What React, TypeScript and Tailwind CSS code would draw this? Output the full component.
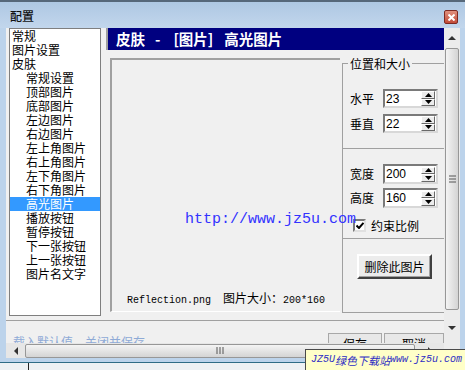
import type { ReactNode } from "react";

const tree = [
  { t: "常规", d: 0 },
  { t: "图片设置", d: 0 },
  { t: "皮肤", d: 0 },
  { t: "常规设置", d: 1 },
  { t: "顶部图片", d: 1 },
  { t: "底部图片", d: 1 },
  { t: "左边图片", d: 1 },
  { t: "右边图片", d: 1 },
  { t: "左上角图片", d: 1 },
  { t: "右上角图片", d: 1 },
  { t: "左下角图片", d: 1 },
  { t: "右下角图片", d: 1 },
  { t: "高光图片", d: 1, sel: true },
  { t: "播放按钮", d: 1 },
  { t: "暂停按钮", d: 1 },
  { t: "下一张按钮", d: 1 },
  { t: "上一张按钮", d: 1 },
  { t: "图片名文字", d: 1 },
];

function Spin() {
  return (
    <div className="ml-auto flex h-[15px] w-[14px] flex-col">
      <div className="flex flex-1 items-center justify-center border border-t-white border-l-white border-r-[#696969] border-b-[#696969] bg-[#ececec]">
        <svg width="7" height="4" viewBox="0 0 7 4">
          <path d="M3.5 0L7 4H0z" fill="#000" />
        </svg>
      </div>
      <div className="flex flex-1 items-center justify-center border border-t-white border-l-white border-r-[#696969] border-b-[#696969] bg-[#ececec]">
        <svg width="7" height="4" viewBox="0 0 7 4">
          <path d="M0 0H7L3.5 4z" fill="#000" />
        </svg>
      </div>
    </div>
  );
}

function Field({ label, value, h = "h-[19px]" }: { label: string; value: string; h?: string }) {
  return (
    <div className="flex items-center pl-[7px]">
      <span className="w-[33px]">{label}</span>
      <div
        className={`flex w-[55px] ${h} items-center border-2 border-t-[#7a7a7a] border-l-[#7a7a7a] border-r-[#d8d8d8] border-b-[#d8d8d8] bg-white pr-[1px]`}
      >
        <span className="pl-[1px] font-['Liberation_Sans',sans-serif] text-[12px]">{value}</span>
        <Spin />
      </div>
    </div>
  );
}

function Arrow({ dir }: { dir: "up" | "down" | "left" | "right" }) {
  const d = {
    up: "M0 4L4 0L8 4z",
    down: "M0 0H8L4 4z",
    left: "M4 0V8L0 4z",
    right: "M0 0L4 4L0 8z",
  }[dir];
  const v = dir === "up" || dir === "down" ? "0 0 8 4" : "0 0 4 8";
  const w = dir === "up" || dir === "down" ? 8 : 4;
  const hh = dir === "up" || dir === "down" ? 4 : 8;
  return (
    <svg width={w} height={hh} viewBox={v}>
      <path d={d} fill="#333" />
    </svg>
  );
}

function Section({ children, cls }: { children: ReactNode; cls: string }) {
  return <div className={`border-l border-[#a0a0a0] ${cls}`}>{children}</div>;
}

export default function App() {
  return (
    <div className="relative h-[370px] w-[465px] overflow-hidden bg-[#bcd3eb] font-['Noto_Sans_CJK_SC',sans-serif] text-[12px] leading-none text-black">
      {/* title bar */}
      <div className="flex h-[28px] items-start justify-between border-t-2 border-[#56687a] bg-gradient-to-b from-[#aec8e3] to-[#c2d6ec] pl-[10px] pr-[7px] pt-[8px]">
        <span className="font-medium text-[#111]">配置</span>
        <div className="flex h-[14px] w-[14px] items-center justify-center rounded-[2px] border border-[#7d2a22] bg-gradient-to-b from-[#e0907e] to-[#c24a38]">
          <svg width="7" height="7" viewBox="0 0 7 7">
            <path d="M0.5 0.5L6.5 6.5M6.5 0.5L0.5 6.5" stroke="#fff" strokeWidth="2" />
          </svg>
        </div>
      </div>

      <div className="flex h-[330px] pl-[6px] pr-[5px]">
        <div className="flex w-[438px] flex-col bg-[#f0f0f0]">
          <div className="flex h-[292px]">
            {/* tree list */}
            <div className="ml-[3px] h-[288px] w-[92px] border border-[#7f7f7f] bg-white">
              {tree.map((n) => (
                <div
                  key={n.t}
                  className={`flex h-[14px] items-center whitespace-nowrap ${n.d ? "pl-[16px]" : "pl-[2px]"} ${n.sel ? "bg-[#3399ff] text-white" : ""}`}
                >
                  {n.t}
                </div>
              ))}
            </div>

            {/* main */}
            <div className="ml-[5px] flex w-[338px] flex-col">
              <div className="flex h-[22px] items-center border-l-2 border-[#a0a0a0] bg-[#000080] pl-[8px] text-[14.5px] font-bold text-white">
                <span>皮肤</span>
                <span className="ml-[10px]">-</span>
                <span className="ml-[13px]">[图片]</span>
                <span className="ml-[11px]">高光图片</span>
              </div>

              <div className="flex">
                {/* preview */}
                <div className="ml-[4px] mt-[8px] flex h-[254px] w-[230px] flex-col border-l-2 border-t-2 border-b border-[#a0a0a0] border-b-white">
                  <div className="relative z-10 ml-[73px] mt-[152px] whitespace-nowrap font-['Liberation_Mono',monospace] text-[15px] text-[#3232ff]">
                    http://www.jz5u.com
                  </div>
                  <div className="mb-[5px] ml-[15px] mt-auto flex items-baseline whitespace-nowrap font-['Liberation_Mono',monospace] text-[10px]">
                    <span>Reflection.png</span>
                    <span className="ml-[12px] font-['Noto_Sans_CJK_SC',sans-serif] text-[12px]">图片大小：</span>
                    <span>200*160</span>
                  </div>
                </div>

                {/* right panel */}
                <div className="ml-[2px] w-[102px]">
                  <Section cls="mt-[13px] h-[85px] border-t">
                    <div className="-mt-[6px] ml-[5px] w-fit bg-[#f0f0f0] px-[2px]">位置和大小</div>
                    <div className="mt-[19px] flex flex-col gap-[6px]">
                      <Field label="水平" value="23" />
                      <Field label="垂直" value="22" />
                    </div>
                  </Section>
                  <Section cls="h-[90px] border-t pt-[15px]">
                    <div className="flex flex-col gap-[4px]">
                      <Field label="宽度" value="200" h="h-[20px]" />
                      <Field label="高度" value="160" h="h-[20px]" />
                    </div>
                    <div className="ml-[10px] mt-[11px] flex items-center">
                      <div className="flex h-[13px] w-[13px] items-center justify-center border-2 border-t-[#7a7a7a] border-l-[#7a7a7a] border-r-[#e0e0e0] border-b-[#e0e0e0] bg-white">
                        <svg width="8" height="7" viewBox="0 0 8 7">
                          <path d="M0.5 3.5L3 6L7.5 0.8" stroke="#000" strokeWidth="2" fill="none" />
                        </svg>
                      </div>
                      <span className="ml-[5px]">约束比例</span>
                    </div>
                  </Section>
                  <Section cls="h-[75px] border-t border-b pt-[15px]">
                    <div className="ml-[14px] flex h-[25px] w-[75px] items-center justify-center border-2 border-t-white border-l-white border-r-[#404040] border-b-[#404040] bg-[#ececec] shadow-[inset_-1px_-1px_0_#a0a0a0]">
                      删除此图片
                    </div>
                  </Section>
                </div>
              </div>
            </div>
          </div>

          <div className="h-px bg-[#a0a0a0]" />

          {/* bottom row, cut off by the scrollbar */}
          <div className="flex h-[22px] overflow-hidden">
            <span className="ml-[7px] mt-[15px] whitespace-nowrap text-[#8eaad6]">载入默认值　关闭并保存</span>
            <div className="ml-auto flex w-[116px] gap-[2px] pt-[12px]">
              <div className="flex h-[22px] w-[62px] justify-center border border-[#a8a8a8] bg-[#e8e8e8] pt-[4px]">保存</div>
              <div className="flex h-[22px] w-[60px] shrink-0 justify-center border border-[#a8a8a8] bg-[#e8e8e8] pt-[4px]">取消</div>
            </div>
          </div>

          {/* horizontal scrollbar */}
          <div className="flex h-[15px] items-center bg-[#e6e6e6]">
            <div className="flex w-[19px] justify-center">
              <Arrow dir="left" />
            </div>
            <div className="flex h-[14px] w-[390px] items-center justify-center rounded-[2px] border border-[#979797] bg-gradient-to-b from-[#f4f4f4] to-[#d4d4d4]">
              <svg width="8" height="7" viewBox="0 0 8 7">
                <path d="M1 0V7M4 0V7M7 0V7" stroke="#555" strokeWidth="1" />
              </svg>
            </div>
            <div className="flex flex-1 justify-center">
              <Arrow dir="right" />
            </div>
          </div>
        </div>

        {/* vertical scrollbar */}
        <div className="flex w-[16px] flex-col bg-[#ececec]">
          <div className="flex h-[20px] items-center justify-center">
            <Arrow dir="up" />
          </div>
          <div className="mx-[1px] flex h-[262px] items-center justify-center rounded-[2px] border border-[#979797] bg-gradient-to-r from-[#f4f4f4] to-[#d4d4d4]">
            <svg width="7" height="8" viewBox="0 0 7 8">
              <path d="M0 1H7M0 4H7M0 7H7" stroke="#555" strokeWidth="1" />
            </svg>
          </div>
          <div className="flex h-[32px] items-center justify-center pt-[4px]">
            <Arrow dir="down" />
          </div>
        </div>
      </div>

      {/* bottom edge */}
      <div className="h-[4px] bg-[#bcd3eb]" />
      <div className="h-px bg-[#2f6c86]" />
      <div className="flex h-[7px] bg-[#eef1f4]">
        <div className="ml-[28px] w-px bg-[#222]" />
      </div>

      {/* watermark banner */}
      <div className="absolute left-[305px] top-[349px] flex h-[22px] w-[162px] items-center whitespace-nowrap border border-[#4a4a4a] bg-[#ffffc8] pl-[5px] italic text-[#2c2cc4]">
        <span className="shrink-0 font-['Liberation_Mono',monospace] text-[10px]">JZ5U</span>
        <span className="shrink-0 text-[11px]">绿色下载站</span>
        <span className="shrink-0 font-['Liberation_Mono',monospace] text-[10px]">www.jz5u.com</span>
      </div>
    </div>
  );
}
